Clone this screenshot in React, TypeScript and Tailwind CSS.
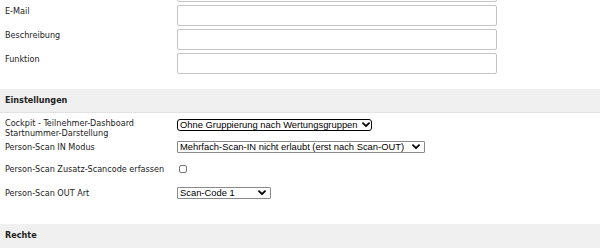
import React from "react";

const labelFont = { fontFamily: '"DejaVu Sans Condensed", "DejaVu Sans", sans-serif' };

function Chevron() {
  return (
    <svg width="8" height="6" viewBox="0 0 8 6" className="shrink-0">
      <path d="M1 1.2 L4 4.2 L7 1.2" fill="none" stroke="#000" strokeWidth="1.8" strokeLinecap="round" strokeLinejoin="round" />
    </svg>
  );
}

function Sel({ text, w, focused }: { text: string; w: string; focused?: boolean }) {
  return (
    <div
      className={`${w} h-[12px] flex items-center justify-between gap-[4px] overflow-hidden pl-[2px] pr-[4px] bg-white ${
        focused ? "border-[1.5px] border-black rounded-[3px]" : "border border-[#8a8a8a] rounded-[1px]"
      }`}
    >
      <span className="text-[9.4px] leading-none text-black whitespace-nowrap" style={{ fontFamily: '"Liberation Sans", Arial, sans-serif' }}>
        {text}
      </span>
      <Chevron />
    </div>
  );
}

function InputRow({ label }: { label: string }) {
  return (
    <div className="flex items-start">
      <div className="w-[177px] pl-[5px] pt-[1px] text-[9px] leading-[11px] text-[#222]">{label}</div>
      <div className="w-[320px] h-[21px] border border-[#c4c4c4] rounded-[2px] bg-white" />
    </div>
  );
}

export default function App() {
  return (
    <div className="w-[600px] h-[248px] overflow-hidden bg-white relative" style={labelFont}>
      <div className="flex flex-col gap-[3px] mt-[-19px]">
        <InputRow label="" />
        <InputRow label="E-Mail" />
        <InputRow label="Beschreibung" />
        <InputRow label="Funktion" />
      </div>

      <div className="mt-[15px] h-[24px] bg-[#f0f0f0] border-b border-[#e2e2e2] flex items-center pl-[5px]">
        <span className="font-bold text-[9px] text-[#222]">Einstellungen</span>
      </div>

      <div className="flex items-start mt-[5px]">
        <div className="w-[177px] pl-[5px] text-[9px] leading-[10px] text-[#222]">
          Cockpit - Teilnehmer-Dashboard
          <br />
          Startnummer-Darstellung
        </div>
        <div className="pt-[1px]">
          <Sel text="Ohne Gruppierung nach Wertungsgruppen" w="w-[195px]" focused />
        </div>
      </div>

      <div className="flex items-center mt-[3px] h-[12px]">
        <div className="w-[177px] pl-[5px] text-[9px] leading-[10px] text-[#222]">Person-Scan IN Modus</div>
        <Sel text="Mehrfach-Scan-IN nicht erlaubt (erst nach Scan-OUT)" w="w-[248px]" />
      </div>

      <div className="flex items-center mt-[10px] h-[12px]">
        <div className="w-[177px] pl-[5px] text-[9px] leading-[10px] text-[#222]">Person-Scan Zusatz-Scancode erfassen</div>
        <div className="ml-[2px] w-[8px] h-[8px] border border-[#777] rounded-[2px] bg-white" />
      </div>

      <div className="flex items-center mt-[12px] h-[12px]">
        <div className="w-[177px] pl-[5px] text-[9px] leading-[10px] text-[#222]">Person-Scan OUT Art</div>
        <Sel text="Scan-Code 1" w="w-[94px]" />
      </div>

      <div className="mt-[25px] h-[24px] bg-[#f0f0f0] flex items-center pl-[5px]">
        <span className="font-bold text-[9px] text-[#222]">Rechte</span>
      </div>
    </div>
  );
}
